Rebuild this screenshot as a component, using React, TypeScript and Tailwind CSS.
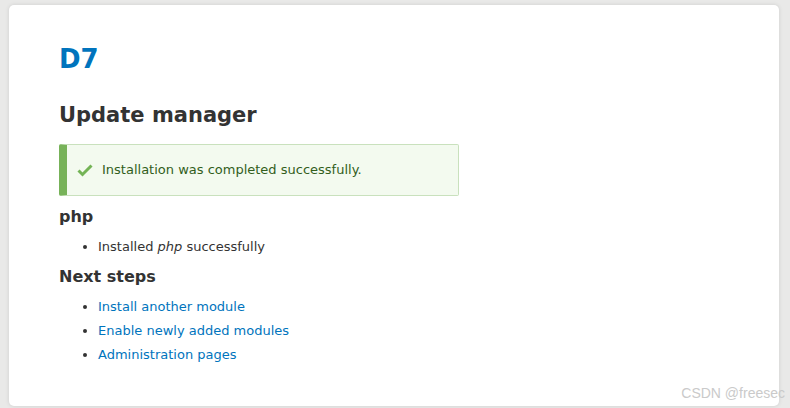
export default function App() {
  const links = [
    "Install another module",
    "Enable newly added modules",
    "Administration pages",
  ];

  return (
    <div
      className="relative w-[790px] h-[408px] bg-[#e9e9e8] pt-[5px] pl-[9px] pr-[11px] overflow-hidden"
      style={{ fontFamily: '"DejaVu Sans", Verdana, sans-serif' }}
    >
      {/* Card */}
      <div className="h-[401px] bg-white rounded-[5px] shadow-[0_0_4px_rgba(0,0,0,0.12)] px-[50px] pt-[36px] text-[#333]">
        <h1 className="text-[26px] leading-[36px] font-bold text-[#0074bd]">D7</h1>

        <h2 className="mt-[24px] text-[21px] leading-[28px] font-bold text-[#333]">
          Update manager
        </h2>

        {/* Status message */}
        <div className="mt-[15px] w-[400px] h-[52px] flex items-center bg-[#f3faef] border border-[#c9e1bd] border-l-[8px] border-l-[#77b259] rounded-[2px] pl-[10px]">
          <svg width="16" height="14" viewBox="0 0 16 14" className="shrink-0">
            <path
              d="M1.5 7.5 L5.5 11.5 L14.5 2.5"
              fill="none"
              stroke="#73b355"
              strokeWidth="3"
            />
          </svg>
          <span className="ml-[9px] text-[13px] text-[#325e1c]">
            Installation was completed successfully.
          </span>
        </div>

        <h3 className="mt-[11px] text-[16px] leading-[20px] font-bold">php</h3>
        <ul className="mt-[10px] list-disc pl-[39px] text-[13px] leading-[20px]">
          <li>
            Installed <em>php</em> successfully
          </li>
        </ul>

        <h3 className="mt-[10px] text-[16px] leading-[20px] font-bold">Next steps</h3>
        <ul className="mt-[8px] list-disc pl-[39px] text-[13px] leading-[24px]">
          {links.map((l) => (
            <li key={l}>
              <a href="#" className="text-[#0074bd]">
                {l}
              </a>
            </li>
          ))}
        </ul>
      </div>

      {/* Watermark */}
      <span
        className="absolute right-[5px] bottom-[4px] text-[14px] text-[#cacaca]"
        style={{ fontFamily: '"Liberation Sans", Arial, sans-serif' }}
      >
        CSDN @freesec
      </span>
    </div>
  );
}
